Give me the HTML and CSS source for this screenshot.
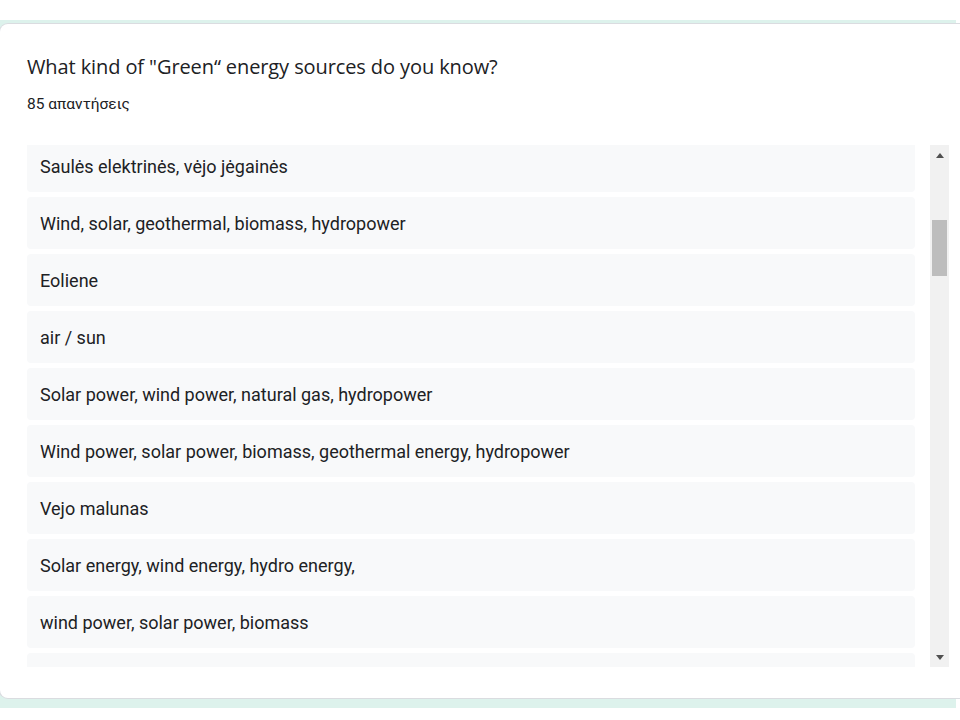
FILE: index.html
```html
<!DOCTYPE html>
<html>
<head>
<meta charset="utf-8">
<link rel="stylesheet" href="styles.css">
</head>
<body>
<div class="page">
  <div class="card">
    <div class="title">What kind of "Green“ energy sources do you know?</div>
    <div class="count">85 απαντήσεις</div>
    <div class="listwrap">
      <div class="list">
        <div class="items">
          <div class="item">Saulės elektrinės, vėjo jėgainės</div>
          <div class="item">Wind, solar, geothermal, biomass, hydropower</div>
          <div class="item">Eoliene</div>
          <div class="item">air / sun</div>
          <div class="item">Solar power, wind power, natural gas, hydropower</div>
          <div class="item">Wind power, solar power, biomass, geothermal energy, hydropower</div>
          <div class="item">Vejo malunas</div>
          <div class="item">Solar energy, wind energy, hydro energy,</div>
          <div class="item">wind power, solar power, biomass</div>
          <div class="item">&nbsp;</div>
        </div>
      </div>
      <div class="scrollbar">
        <div class="arrow up"></div>
        <div class="track"><div class="thumb"></div></div>
        <div class="arrow down"></div>
      </div>
    </div>
  </div>
</div>
</body>
</html>
```
FILE: styles.css
```css
html, body {
  margin: 0;
  padding: 0;
  background: #ffffff;
  overflow: hidden;
}
.page {
  width: 956px;
  margin-top: 20px;
  padding-top: 4px;
  padding-bottom: 10px;
  background: #ddf2ec;
  box-sizing: border-box;
  height: 688px;
}
.card {
  height: 674px;
  background: #ffffff;
  border-radius: 8px;
  box-shadow: 0 0 0 1px #dadce0;
  box-sizing: border-box;
  padding: 29px 0 0 27px;
  width: 980px;
}
.title {
  font-family: "Open Sans", Roboto, sans-serif;
  font-size: 20px;
  line-height: 28px;
  color: #202124;
  letter-spacing: -0.1px;
}
.count {
  font-family: Roboto, "Noto Sans", sans-serif;
  font-size: 15.5px;
  line-height: 20px;
  color: #202124;
  margin-top: 13px;
}
.listwrap {
  display: flex;
  margin-top: 31px;
  height: 522px;
}
.list {
  width: 888px;
  overflow: hidden;
}
.items {
  margin-top: -5px;
  display: flex;
  flex-direction: column;
  gap: 5px;
}
.item {
  height: 52px;
  box-sizing: border-box;
  background: #f8f9fa;
  border-radius: 4px;
  padding: 15px 13px 0 13px;
  font-family: Roboto, "Noto Sans", sans-serif;
  font-size: 18px;
  line-height: 24px;
  color: #202124;
  flex: none;
}
.scrollbar {
  margin-left: 15px;
  width: 19px;
  background: #f1f1f1;
  display: flex;
  flex-direction: column;
}
.arrow {
  height: 20px;
  display: flex;
  align-items: center;
  justify-content: center;
  flex: none;
}
.arrow::before {
  content: "";
  width: 0;
  height: 0;
  border-left: 4px solid transparent;
  border-right: 4px solid transparent;
}
.up::before {
  border-bottom: 5px solid #505050;
}
.down::before {
  border-top: 5px solid #505050;
}
.track {
  flex: 1;
  padding-top: 55px;
}
.thumb {
  margin: 0 2px;
  height: 56px;
  background: #bdbdbd;
}
```
